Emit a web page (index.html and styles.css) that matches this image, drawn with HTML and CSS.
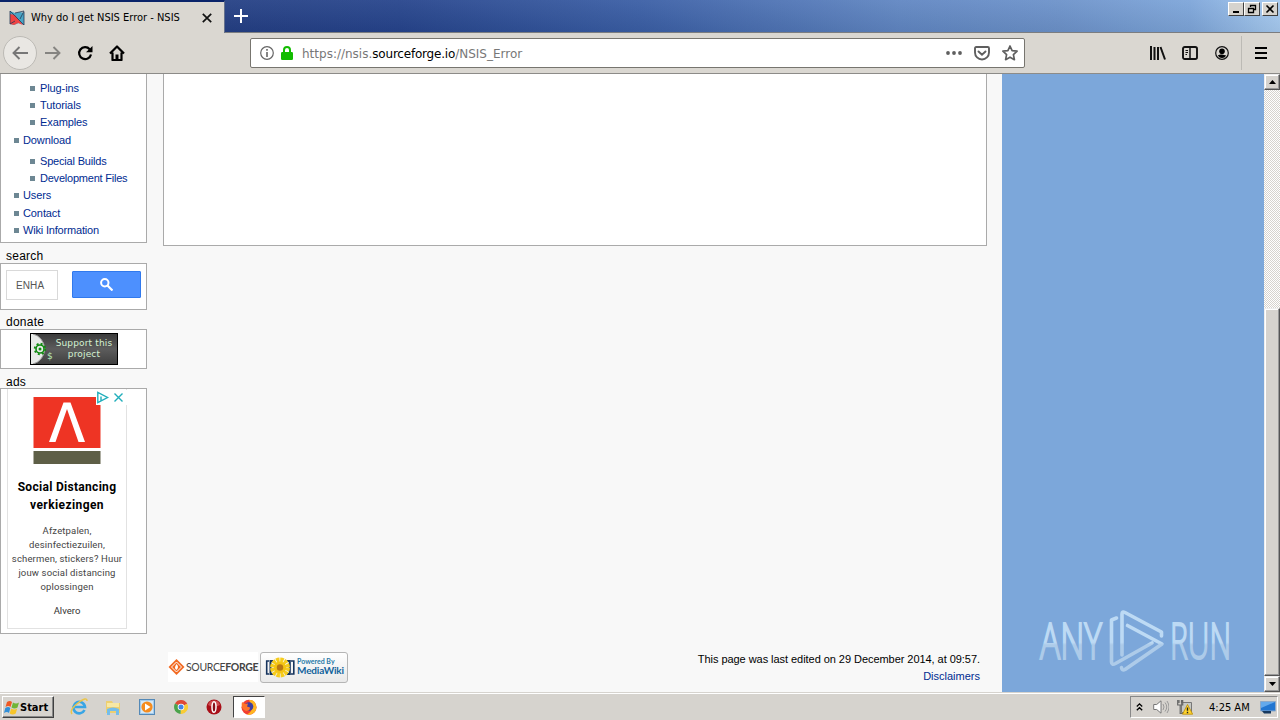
FILE: index.html
```html
<!DOCTYPE html>
<html lang="en">
<head>
<meta charset="utf-8">
<title>Why do I get NSIS Error - NSIS</title>
<link rel="stylesheet" href="styles.css">
</head>
<body>
<header class="titlebar">
  <div class="tab">
    <svg class="favicon" width="16" height="16" viewBox="0 0 16 16"><path d="M1 1l5 2 5-1 4 1v12l-5-2-5 2-4-1z" fill="#49a5c6"/><path d="M1 4l5 1 8 10-5-2-4 2-4-1z" fill="#ee4444"/><path d="M1 1l14 14M1 1v13l5-3M15 2v13M6 3l9-2-4 8" fill="none" stroke="#273855" stroke-width=".8"/></svg>
    <span class="tab-title">Why do I get NSIS Error - NSIS</span>
    <svg class="tab-close" width="10" height="10" viewBox="0 0 10 10"><path d="M.8.8l8.4 8.4M9.200.8L.8 9.200" stroke="#111" stroke-width="1.700"/></svg>
  </div>
  <svg class="newtab" width="14" height="14" viewBox="0 0 14 14"><path d="M7 0v14M0 7h14" stroke="#fff" stroke-width="2"/></svg>
  <div class="winbtns">
    <span class="winbtn"><svg width="10" height="10"><path d="M2 8h6" stroke="#000" stroke-width="2"/></svg></span>
    <span class="winbtn"><svg width="10" height="10"><path d="M3.500 3V1.500h5v4H7M3 1.500h6M1.500 4.500h5v4h-5zM1 4.500h6" fill="none" stroke="#000" stroke-width="1.300"/></svg></span>
    <span class="winbtn close"><svg width="10" height="10"><path d="M1.500 1.500l7 7M8.500 1.500l-7 7" stroke="#000" stroke-width="1.600"/></svg></span>
  </div>
</header>

<nav class="toolbar">
  <span class="back"><svg width="16" height="14" viewBox="0 0 16 14"><path d="M16 7H1.500M7.500 1l-6 6 6 6" fill="none" stroke="#777" stroke-width="1.900"/></svg></span>
  <svg class="forward" width="16" height="14" viewBox="0 0 16 14"><path d="M0 7h14.500M8.500 1l6 6-6 6" fill="none" stroke="#858481" stroke-width="1.900"/></svg>
  <svg class="reload" width="16" height="16" viewBox="0 0 16 16"><path d="M12.700 4.200A6 6 0 1 0 14 9.500" fill="none" stroke="#000" stroke-width="2.200"/><path d="M15.500 1v6.200H9z"/></svg>
  <svg class="home" width="16" height="16" viewBox="0 0 16 16"><path d="M1 8.500L8 1.500l7 7M3.500 7.500V15h9V7.500" fill="none" stroke="#000" stroke-width="2.200" stroke-linejoin="round"/><path d="M6.500 15V9.500h3V15z"/></svg>
  <div class="urlbar">
    <svg class="info" width="14" height="14" viewBox="0 0 14 14"><circle cx="7" cy="7" r="6.300" fill="none" stroke="#666" stroke-width="1.200"/><path d="M7 6v5M7 3v1.700" stroke="#666" stroke-width="1.600"/></svg>
    <svg class="lock" width="12" height="14" viewBox="0 0 12 14"><path d="M3 7V4a3 3 0 0 1 6 0v3" fill="none" stroke="#12bc00" stroke-width="2"/><rect y="6" width="12" height="8" rx="1.200" fill="#12bc00"/></svg>
    <span class="url">https://nsis.<b>sourceforge.io</b>/NSIS_Error</span>
    <svg class="dots" width="16" height="4" viewBox="0 0 16 4"><circle cx="2" cy="2" r="1.900"/><circle cx="8" cy="2" r="1.900"/><circle cx="14" cy="2" r="1.900"/></svg>
    <svg class="pocket" width="16" height="15" viewBox="0 0 16 15"><path d="M2.200 1h11.600q1.200 0 1.200 1.200V6.500a7 7 0 0 1-14 0V2.200Q1 1 2.200 1z" fill="none" stroke="#5f5f5f" stroke-width="1.900"/><path d="M4.500 5.500L8 8.800l3.500-3.300" fill="none" stroke="#5f5f5f" stroke-width="1.900" stroke-linecap="round"/></svg>
    <svg class="star" width="16" height="16" viewBox="0 0 16 16"><path d="M8 1l2.100 4.700 5 .5-3.700 3.500 1 5L8 12.200l-4.400 2.500 1-5L.9 6.200l5-.5z" fill="none" stroke="#5f5f5f" stroke-width="1.700" stroke-linejoin="round"/></svg>
  </div>
  <svg class="library" width="16" height="14" viewBox="0 0 16 14"><path d="M1 0v14M4.500 1v13M8 1v13M10.500 1L15 13.500" stroke="#111" stroke-width="2" fill="none"/></svg>
  <svg class="sidebars" width="16" height="14" viewBox="0 0 16 14"><rect x="1" y="1" width="14" height="12" rx="1.800" fill="none" stroke="#111" stroke-width="1.900"/><path d="M8 1v12" stroke="#111" stroke-width="1.500"/><path d="M3.500 4.500h2.500M3.500 6.500h2.500M3.500 8.500h1.500" stroke="#111"/></svg>
  <svg class="account" width="14" height="14" viewBox="0 0 14 14"><circle cx="7" cy="7" r="6.300" fill="none" stroke="#111" stroke-width="1.200"/><circle cx="7" cy="5.300" r="2.800"/><path d="M2.800 9.500Q5 8 7 8.500t4.200 1Q9.800 12 7 12T2.800 9.500z"/></svg>
  <span class="divider"></span>
  <svg class="menu" width="12" height="12" viewBox="0 0 12 12"><path d="M0 1h12M0 6h12M0 11h12" stroke="#000" stroke-width="2"/></svg>
</nav>

<main class="viewport">
  <div class="page">
    <aside class="sidebar">
      <ul class="portlet links">
        <li class="sub">Plug-ins</li>
        <li class="sub">Tutorials</li>
        <li class="sub">Examples</li>
        <li class="tall">Download</li>
        <li class="sub first">Special Builds</li>
        <li class="sub">Development Files</li>
        <li>Users</li>
        <li class="tall">Contact</li>
        <li>Wiki Information</li>
      </ul>
      <h5 class="head">search</h5>
      <div class="portlet search">
        <span class="field">ENHA</span>
        <span class="go"><svg width="13" height="13" viewBox="0 0 13 13"><circle cx="4.800" cy="4.800" r="3.700" fill="none" stroke="#fff" stroke-width="2"/><path d="M7.500 7.500l5 5" stroke="#fff" stroke-width="2.200"/></svg></span>
      </div>
      <h5 class="head donate-head">donate</h5>
      <div class="portlet donate">
        <div class="support">
          <svg width="24" height="30" viewBox="0 0 24 30"><path d="M0 0h2a15.500 15.500 0 0 1 0 30H0z" fill="#e8eae8"/><path d="M2 0a15.500 15.500 0 0 1 0 30" fill="none" stroke="#9a9a9a"/><circle cx="9" cy="15" r="4" fill="none" stroke="#118a11" stroke-width="1.600"/><circle cx="9" cy="15" r="5.300" fill="none" stroke="#118a11" stroke-width="1.800" stroke-dasharray="2 2.160"/><circle cx="9" cy="15" r="1.500" fill="#118a11"/><text x="16" y="25" class="dollar">$</text></svg>
          <span class="support-text">Support this<br>project</span>
        </div>
      </div>
      <h5 class="head ads-head">ads</h5>
      <div class="portlet ads">
        <div class="ad">
          <svg class="ad-logo" width="68" height="67" viewBox="0 0 68 67"><path d="M.5 0h67v51H.5z" fill="#ee3424"/><path d="M16 45L30.500 5.500h7L52 45h-6.500L34 12 22.500 45z" fill="#fff"/><path d="M.5 54h67v13H.5z" fill="#5e5f47"/></svg>
          <svg class="ad-choices" width="32" height="15" viewBox="0 0 32 15"><path d="M0 0h31v15H0z" fill="#fff"/><path d="M1.800 2.500v10l9.700-5zM5 6.500v4" fill="none" stroke="#20aebb" stroke-width="1.400"/><path d="M18.500 3.500l8 8M26.500 3.500l-8 8" stroke="#20aebb" stroke-width="1.400"/></svg>
          <div class="ad-title"><span class="t1">Social Distancing</span><br><span class="t2">verkiezingen</span></div>
          <div class="ad-copy">Afzetpalen,<br>desinfectiezuilen,<br>schermen, stickers? Huur<br>jouw social distancing<br>oplossingen</div>
          <div class="ad-brand">Alvero</div>
        </div>
      </div>
    </aside>
    <section class="main-col">
      <div class="content"></div>
      <footer class="foot">
        <div class="sf">
          <svg width="18" height="30" viewBox="0 0 18 30"><path d="M8.500 7L16.500 15l-8 8L.5 15z" fill="#f26a22"/><path d="M8.500 10L3.500 15l5 5 5-5z" fill="none" stroke="#fff" stroke-width="1"/><path d="M8.500 12q3 3 0 6-3-2 0-6" fill="#fff"/></svg>
          <span class="sf-text">SOURCE<b>FORGE</b></span>
        </div>
        <div class="mw">
          <svg width="36" height="29" viewBox="0 0 36 29"><g fill="none" stroke="#16345e"><path d="M8 8H5.700v13H8M30 8h2.800v13H30" stroke-width="1.600"/><path d="M12 8H9.500v13H12M26 8h2.800v13H26" stroke-width="2"/></g><circle cx="19" cy="14.500" r="7.500" fill="none" stroke="#f6cc1c" stroke-width="5" stroke-dasharray="3.200 .73"/><circle cx="19" cy="14.500" r="6" fill="#f4c414"/><circle cx="19" cy="14.500" r="3.200" fill="#b87814"/></svg>
          <div class="mw-text"><span class="pow">Powered By</span><span class="mwt">MediaWiki</span></div>
        </div>
        <div class="foot-text">
          <span class="edited">This page was last edited on 29 December 2014, at 09:57.</span>
          <span class="disc">Disclaimers</span>
        </div>
      </footer>
    </section>
  </div>
  <div class="ad-side">
    <svg width="202" height="98" viewBox="0 -20 202 98">
      <defs><linearGradient id="g" x1="0" y1="0" x2="0" y2="66" gradientUnits="userSpaceOnUse"><stop offset=".52" stop-color="#bddaf4"/><stop offset=".56" stop-color="#adcbe9"/></linearGradient></defs>
      <g fill="url(#g)" stroke="url(#g)" class="mark"><text x="3" y="51" textLength="62" lengthAdjust="spacingAndGlyphs">ANY</text><text x="133" y="51" textLength="61" lengthAdjust="spacingAndGlyphs">RUN</text></g>
      <path d="M79.500 10l-5 2V54q0 3.500 4 1.500L115 35M85 47V6q0-3 3-1.500L124.500 24v4M90.500 17.500L125 36 88 61.500q-3 1.500-3.500-2" fill="none" stroke="url(#g)" stroke-width="3.600" stroke-linejoin="round" stroke-linecap="round"/>
    </svg>
  </div>
  <div class="scrollbar">
    <span class="sbtn"><svg width="7" height="4"><path d="M3.500 0L7 4H0z"/></svg></span>
    <span class="thumb"></span>
    <span class="sbtn"><svg width="7" height="4"><path d="M3.500 4L7 0H0z"/></svg></span>
  </div>
</main>

<footer class="taskbar">
  <div class="start"><svg width="16" height="15" viewBox="0 0 16 15"><path d="M3 2q3-2 5 0L6.500 7q-2-2-5 0z" fill="#ef5924"/><path d="M9 2.500q3 2 6 0L13.500 7.500q-3 2-6 0z" fill="#70b536"/><path d="M1.300 8q3-2 5 0L5 13q-2-2-5 0z" fill="#328fd8"/><path d="M7.200 8.500q3 2 6 0L11.700 13.500q-3 2-6 0z" fill="#f7c52a"/></svg><b>Start</b></div>
  <svg class="ic ie" width="18" height="18" viewBox="0 0 18 18"><path d="M14.500 12A5.800 5.800 0 1 1 15 9H5" fill="none" stroke="#38a5e5" stroke-width="2.600"/><path d="M2 16Q-1 12 8 5t9-2" fill="none" stroke="#ebc548" stroke-width="1.500"/></svg>
  <svg class="ic ex" width="18" height="18" viewBox="0 0 18 18"><path d="M2 3h6l1 2h7v10H2z" fill="#edcf70"/><path d="M3 5h12v4H3z" fill="#f8e8a3"/><path d="M3 17v-6q6-3 12 0v6h-3v-4H6v4z" fill="#75bdea"/></svg>
  <svg class="ic mp" width="16" height="16" viewBox="0 0 16 16"><rect x=".5" y=".5" width="15" height="15" fill="#a3ccee" stroke="#5489b7"/><path d="M2 2h12v12H2z" fill="#d5e8f6"/><circle cx="8" cy="8" r="5.600" fill="#f58c1f"/><path d="M6 4.500v7L11.500 8z" fill="#fff"/></svg>
  <svg class="ic ch" width="14" height="14" viewBox="0 0 14 14"><path d="M7 7L1 3.500A7 7 0 0 1 13.200 3.800z" fill="#df4936"/><path d="M7 7l6.200-3.200A7 7 0 0 1 6.500 14z" fill="#f9cc35"/><path d="M7 7l-.5 7A7 7 0 0 1 1 3.500z" fill="#4ba34b"/><circle cx="7" cy="7" r="3.300" fill="#fff"/><circle cx="7" cy="7" r="2.500" fill="#4385e8"/></svg>
  <svg class="ic op" width="16" height="16" viewBox="0 0 16 16"><circle cx="8" cy="8" r="7.500" fill="#a90f18"/><path d="M2 6a6.300 6.300 0 0 1 12 0Q8 9 2 6" fill="#cf4d50"/><ellipse cx="8" cy="8" rx="2" ry="5.300" fill="#871019" stroke="#fff" stroke-width="1.500"/></svg>
  <div class="active"><svg width="16" height="16" viewBox="0 0 16 16"><circle cx="8" cy="8.200" r="7.500" fill="#f23f30"/><path d="M8 1q6-1 7.300 6A7.500 7.500 0 0 1 6 15.500Q12 12 11 7z" fill="#ffb620"/><circle cx="8" cy="7.500" r="4.300" fill="#403fa0"/><path d="M1 3l3 2 3-.5-1 3 3 1Q9 12 5 12-.5 10 1 3" fill="#ff7429"/></svg></div>
  <div class="tray">
    <svg class="chev" width="7" height="8" viewBox="0 0 7 8"><path d="M.8 3.500l2.700-2.600 2.700 2.600M.8 7.300l2.700-2.600 2.700 2.600" fill="none" stroke="#000" stroke-width="1.300"/></svg>
    <svg class="spk" width="16" height="14" viewBox="0 0 16 14"><path d="M.7 4.500h3L8 .8v12.400L3.700 9.500h-3z" fill="#fff" stroke="#777"/><path d="M10 4q2 3 0 6M12 2.500q3.500 4.500 0 9M14 1q4 6 0 12" fill="none" stroke="#999"/></svg>
    <svg class="net" width="16" height="16" viewBox="0 0 16 16"><path d="M4.500 3.500h10v10h-10z" fill="#c6c8c4" stroke="#777"/><path d="M.7 1v5h5V1M3.200 6v8.500h3M2 1v3M4.500 1v3" fill="none" stroke="#666" stroke-width="1.200"/><path d="M10.500 5.500l5.200 9.700H5.500z" fill="#ffd42e" stroke="#bb8c00" stroke-width=".8"/><path d="M10.500 8.500v3.300M10.500 12.700v1.500" stroke="#222" stroke-width="1.400"/></svg>
    <span class="clock">4:25 AM</span>
    <svg class="desk" width="16" height="13" viewBox="0 0 16 13"><path d="M.5.500h15v9.500H.5z" fill="#2276d1" stroke="#8da9c8"/><path d="M1 1h14L1 7z" fill="#63a9ec"/><path d="M2 10h9v2.500H4z" fill="#17395f"/></svg>
  </div>
</footer>
</body>
</html>
```
FILE: styles.css
```css
* { box-sizing: border-box; }
body { margin: 0; width: 1280px; height: 720px; overflow: hidden; display: flex; flex-direction: column; font-family: "Liberation Sans", sans-serif; font-size: 11px; color: #000; background: #dad7d1; }
svg { display: block; flex: none; }
h5, ul { margin: 0; padding: 0; font-weight: normal; }

.titlebar { height: 33px; flex: none; display: flex; align-items: flex-start; border-bottom: 1px solid #7b7d80; background: linear-gradient(to bottom, rgba(255,255,255,.06), rgba(0,0,0,.06)), linear-gradient(90deg, #0a246a 0, #243f84 225px, #26448c 400px, #3a5ea5 640px, #6086c2 900px, #6c92ca 1060px, #7da5d9 1190px, #a6caf0 1280px); }
.tab { width: 225px; height: 33px; display: flex; align-items: center; padding-left: 9px; background: #dad7d1; border-top: 2px solid #0a246a; border-right: 1px solid #65718c; }
.tab-title { margin-left: 6px; width: 150px; font: 11px/16px "DejaVu Sans Condensed", "DejaVu Sans", sans-serif; font-stretch: condensed; letter-spacing: 0; white-space: nowrap; }
.tab-close { margin-left: 21px; }
.newtab { margin: 9px 0 0 9px; }
.winbtns { margin: 2px 2px 0 auto; display: flex; }
.winbtn { width: 16px; height: 14px; display: flex; align-items: center; justify-content: center; background: #d6d3ce; border: 1px solid; border-color: #fff #404040 #404040 #fff; }
.close { margin-left: 2px; }

.toolbar { height: 41px; flex: none; display: flex; align-items: center; padding-left: 3px; background: #dad7d1; border-bottom: 1px solid #8c8b88; }
.back { width: 34px; height: 34px; border-radius: 50%; border: 1px solid #bcbab5; background: #e9e7e3; display: flex; align-items: center; justify-content: center; }
.forward { margin-left: 8px; }
.reload { margin-left: 16px; }
.home { margin-left: 16px; }
.urlbar { margin-left: 125px; width: 775px; height: 30px; background: #fff; border: 1px solid #77756f; border-radius: 2px; display: flex; align-items: center; padding-left: 9px; }
.lock { margin-left: 7px; }
.url { margin-left: 9px; font: 12px "DejaVu Sans", sans-serif; letter-spacing: 0; color: #777; padding-top: 1px; }
.url b { color: #000; font-weight: normal; letter-spacing: -.2px; }
.dots { margin-left: auto; fill: #5f5f5f; }
.pocket { margin-left: 12px; }
.star { margin: 0 6px 0 12px; }
.library { margin-left: 125px; }
.sidebars { margin-left: 16px; }
.account { margin-left: 17px; }
.divider { width: 1px; height: 34px; margin-left: 12px; background: #bcbab5; }
.menu { margin-left: 13px; }

.viewport { height: 618px; flex: none; display: grid; grid-template-columns: 1002px 262px 16px; }
.page { background: #f8f8f8; display: flex; }
.sidebar { width: 147px; }
.portlet { background: #fff; border: 1px solid #aaa; }
.links { height: 169px; border-top: 0; padding-top: 6px; list-style: none; color: #002b91; }
.links li { height: 17px; line-height: 17px; padding-left: 13px; display: flex; align-items: center; white-space: nowrap; letter-spacing: -.1px; }
.links li::before { content: ""; width: 5px; height: 5px; background: #6d8793; margin-right: 4px; }
.links .sub { padding-left: 29px; }
.links .sub::before { margin-right: 5px; }
.links .sub:nth-child(6) { letter-spacing: -.22px; }
.links .sub:nth-child(5), .links li:nth-child(9) { letter-spacing: -.18px; }
.links .tall { height: 18px; padding-top: 1px; }
.links .first { margin-top: 4px; }
.head { height: 20px; line-height: 26px; font-size: 12px; padding-left: 6px; letter-spacing: .25px; }
.donate-head { line-height: 24px; }
.search { height: 47px; padding: 6px 5px; display: flex; justify-content: space-between; align-items: flex-start; }
.field { width: 52px; height: 30px; border: 1px solid #d9d9d9; line-height: 29px; padding-left: 9px; color: #555; font-size: 10px; letter-spacing: .1px; }
.go { width: 69px; height: 27px; margin-top: 1px; background: #4d90fe; border: 1px solid #3079ed; border-radius: 1px; display: flex; align-items: center; justify-content: center; }
.donate { height: 40px; margin-top: -1px; padding: 3px 0 0 29px; }
.support { width: 88px; height: 32px; border: 1px solid #000; background: linear-gradient(#3c3c3c, #5c5c5c 50%, #404040); display: flex; }
.support-text { width: 62px; margin-left: -2px; padding-top: 4px; text-align: center; color: #d4f2d2; font: 9px/11px "DejaVu Sans", sans-serif; white-space: nowrap; letter-spacing: .15px; }
.dollar { font: 9px "DejaVu Sans", sans-serif; fill: #b8efb8; }
.ads { height: 246px; padding: 0 6px; }
.ads-head { height: 19px; line-height: 26px; }
.ad { position: relative; width: 120px; height: 240px; border: 1px solid #e2e2e2; border-top: 0; text-align: center; padding-top: 8px; }
.ad-logo { margin-left: 25px; }
.ad-choices { position: absolute; left: 88px; top: 1px; }
.ad-title { margin-top: 14px; font: bold 12px/18px Roboto, sans-serif; white-space: nowrap; }
.t1 { letter-spacing: .3px; }
.t2 { letter-spacing: .4px; }
.ad-copy { margin-top: 10px; font: 9.500px/14px Roboto, sans-serif; color: #444; white-space: nowrap; letter-spacing: .15px; }
.ad-brand { margin-top: 10px; font: 9.500px/14px Roboto, sans-serif; color: #333; }

.main-col { flex: 1; padding: 0 15px 0 16px; display: flex; flex-direction: column; justify-content: space-between; }
.content { height: 172px; background: #fff; border: 1px solid #aaa; border-top: 0; }
.foot { height: 40px; display: flex; align-items: flex-start; padding-left: 5px; }
.sf { width: 90px; height: 30px; background: #fff; display: flex; align-items: center; }
.sf-text { font: 10.500px/16px Lato, sans-serif; color: #444; letter-spacing: -.35px; white-space: nowrap; }
.mw { width: 88px; height: 31px; margin-left: 2px; border: 1px solid #b5b5b5; border-radius: 3px; background: linear-gradient(#fff, #e9e9e9); display: flex; }
.mw-text { display: flex; flex-direction: column; padding-top: 4px; white-space: nowrap; }
.pow { font: bold 7px/8px Lato, sans-serif; color: #2779a7; }
.mwt { font: bold 10px/11px Lato, sans-serif; color: #12639b; letter-spacing: -.15px; }
.foot-text { margin-left: auto; padding-right: 7px; display: flex; flex-direction: column; align-items: flex-end; line-height: 17px; margin-top: -1px; }
.edited { letter-spacing: -.05px; white-space: nowrap; }
.disc { color: #002b91; }

.ad-side { background: #7ca7da; display: flex; align-items: flex-end; padding: 0 0 6px 35px; }
.mark { font: 50px "Open Sans", sans-serif; font-weight: 300; stroke-width: 2px; }
.scrollbar { display: flex; flex-direction: column; background: repeating-conic-gradient(#fff 0 25%, #d6d3ce 0 50%) 0 0 / 2px 2px; }
.sbtn, .thumb { height: 16px; background: #d6d3ce; border: 1px solid; border-color: #eee #555 #555 #eee; box-shadow: inset -1px -1px #999, inset 1px 1px #fff; display: flex; align-items: center; justify-content: center; }
.thumb { height: 368px; margin-top: 218px; }

.taskbar { height: 28px; flex: none; border-top: 1px solid #d6d3ce; box-shadow: inset 0 1px #fff; background: #d6d3ce; display: flex; align-items: center; padding: 1px 2px 0 2px; }
.start { width: 52px; height: 22px; border: 1px solid; border-color: #fff #404040 #404040 #fff; box-shadow: inset -1px -1px #888; display: flex; align-items: center; padding-left: 1px; }
.start b { font: bold 11px "DejaVu Sans Condensed", "DejaVu Sans", sans-serif; font-stretch: condensed; letter-spacing: 0; }
.ie { margin-left: 16px; }
.ex { margin-left: 16px; }
.mp { margin-left: 17px; }
.ch { margin-left: 19px; }
.op { margin-left: 18px; }
.active { width: 32px; height: 22px; margin-left: 11px; background: #fff; border: 1px solid; border-color: #444 #fff #fff #444; display: flex; align-items: center; justify-content: center; }
.tray { margin-left: auto; width: 148px; height: 22px; border: 1px solid; border-color: #888 #fff #fff #888; display: flex; align-items: center; padding-left: 5px; }
.spk { margin-left: 10px; }
.net { margin-left: 8px; }
.clock { margin-left: 16px; width: 42px; font: 11px "DejaVu Sans Condensed", "DejaVu Sans", sans-serif; font-stretch: condensed; letter-spacing: 0; white-space: nowrap; }
.desk { margin-left: 9px; }
```
